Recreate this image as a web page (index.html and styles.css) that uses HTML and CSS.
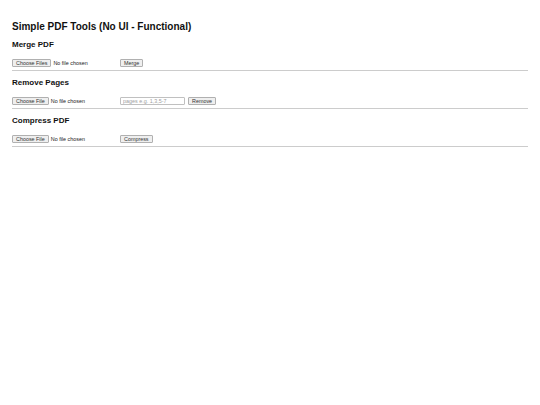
FILE: index.html
```html
<!DOCTYPE html>
<html lang="en">
<head>
<meta charset="utf-8">
<title>Simple PDF Tools</title>
<link rel="stylesheet" href="styles.css">
</head>
<body>
<h1 class="title">Simple PDF Tools (No UI - Functional)</h1>

<section class="tool">
  <h2 class="tool-title">Merge PDF</h2>
  <div class="tool-row">
    <input class="file" type="file" multiple accept="application/pdf">
    <button class="btn" type="button">Merge</button>
  </div>
  <hr class="rule">
</section>

<section class="tool">
  <h2 class="tool-title">Remove Pages</h2>
  <div class="tool-row">
    <input class="file" type="file" accept="application/pdf">
    <input class="text" type="text" placeholder="pages e.g. 1,3,5-7">
    <button class="btn" type="button">Remove</button>
  </div>
  <hr class="rule">
</section>

<section class="tool">
  <h2 class="tool-title">Compress PDF</h2>
  <div class="tool-row">
    <input class="file" type="file" accept="application/pdf">
    <button class="btn" type="button">Compress</button>
  </div>
  <hr class="rule">
</section>
</body>
</html>
```

FILE: styles.css
```css
html, body {
  margin: 0;
  background: #ffffff;
}

body {
  padding: 0 12px;
  font-family: "Liberation Sans", Arial, sans-serif;
  color: #000000;
}

.title {
  margin: 21px 0 7px;
  font-size: 10px;
  line-height: 12px;
  font-weight: 700;
  color: #111111;
}

.tool {
  display: flex;
  flex-direction: column;
}

.tool-title {
  margin: 0;
  font-size: 8px;
  line-height: 10px;
  font-weight: 700;
  color: #111111;
}

.tool-row {
  margin-top: 8px;
  height: 9px;
  display: flex;
  align-items: center;
  gap: 3px;
}

.file {
  width: 105px;
  height: 8px;
  margin: 0;
  padding: 0;
  font-family: "Liberation Sans", Arial, sans-serif;
  font-size: 5.4px;
  line-height: 8px;
  color: #222222;
}

.file::file-selector-button {
  box-sizing: border-box;
  height: 8px;
  margin: 0 2px 0 0;
  padding: 0 3px;
  border: 1px solid #b0b0b0;
  border-radius: 1px;
  background: #efefef;
  color: #333333;
  font-family: "Liberation Sans", Arial, sans-serif;
  font-size: 5.4px;
  line-height: 6px;
}

.btn {
  box-sizing: border-box;
  height: 8px;
  margin: 0;
  padding: 0 3px;
  border: 1px solid #b0b0b0;
  border-radius: 1px;
  background: #efefef;
  color: #333333;
  font-family: "Liberation Sans", Arial, sans-serif;
  font-size: 5.4px;
  line-height: 6px;
}

.text {
  box-sizing: border-box;
  width: 65px;
  height: 8px;
  margin: 0;
  padding: 0 2px;
  border: 1px solid #c0c0c0;
  border-radius: 1px;
  font-family: "Liberation Sans", Arial, sans-serif;
  font-size: 5.4px;
  line-height: 6px;
  color: #000000;
}

.text::placeholder {
  color: #a0a0a0;
}

.rule {
  margin: 3px 0 7px;
  border: none;
  border-top: 1px solid #cccccc;
  height: 0;
}
```
